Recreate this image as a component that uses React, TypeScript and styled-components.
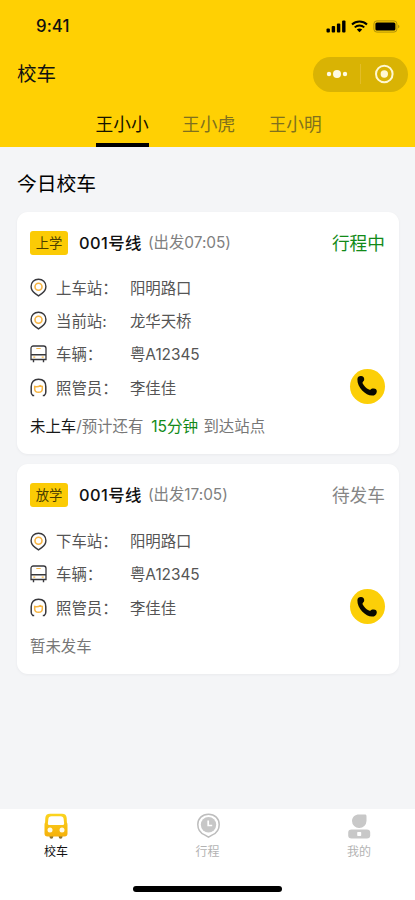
import React from "react";
import styled, { createGlobalStyle } from "styled-components";

const GlobalStyle = createGlobalStyle`
  * { box-sizing: border-box; }
  body {
    margin: 0;
    background: #f4f5f7;
    font-family: Inter, "Noto Sans CJK SC", sans-serif;
    color: #111;
  }
`;

const Screen = styled.div`
  width: 415px;
  height: 900px;
  display: flex;
  flex-direction: column;
  overflow: hidden;
  background: #f4f5f7;
`;

const Header = styled.header`
  height: 147px;
  flex: none;
  background: #ffd003;
  display: flex;
  flex-direction: column;
`;

const StatusBar = styled.div`
  height: 52px;
  padding: 0 15px 0 36px;
  display: flex;
  align-items: center;
  justify-content: space-between;
`;

const Clock = styled.span`
  font-size: 16.8px;
  font-weight: 500;
  line-height: 20px;
  letter-spacing: 0.1px;
`;

const StatusIcons = styled.div`
  display: flex;
  align-items: center;
  gap: 5px;
  svg { display: block; }
`;

const TitleBar = styled.div`
  height: 44px;
  padding: 0 7px 0 17px;
  display: flex;
  align-items: center;
  justify-content: space-between;
`;

const PageTitle = styled.h1`
  margin: 0;
  font-size: 19.5px;
  font-weight: 400;
  line-height: 26px;
`;

const Capsule = styled.div`
  width: 95px;
  height: 35px;
  border-radius: 18px;
  background: #d9b304;
  display: flex;
  align-items: center;
`;

const CapsuleHalf = styled.div<{ $divided?: boolean }>`
  flex: 1;
  height: 20px;
  display: flex;
  align-items: center;
  justify-content: center;
  border-right: ${(p) => (p.$divided ? "1px solid #e2bd28" : "none")};
`;

const Tabs = styled.nav`
  flex: 1;
  padding-left: 95.5px;
  display: flex;
  gap: 33.5px;
`;

const Tab = styled.div<{ $active?: boolean }>`
  height: 51px;
  padding-top: 16px;
  font-size: 17.7px;
  line-height: 26px;
  font-weight: 400;
  white-space: nowrap;
  color: ${(p) => (p.$active ? "#161300" : "#80701e")};
  border-bottom: 4px solid ${(p) => (p.$active ? "#000" : "transparent")};
`;

const Main = styled.main`
  flex: 1;
  padding: 22px 16px 0 17px;
  display: flex;
  flex-direction: column;
`;

const Heading = styled.h2`
  margin: 0 0 13px;
  font-size: 19.8px;
  font-weight: 400;
  line-height: 30px;
  color: #000;
`;

const Card = styled.section<{ $height: number }>`
  height: ${(p) => p.$height}px;
  margin-bottom: 10px;
  padding: 18px 14px 0 13px;
  border-radius: 11px;
  background: #fff;
  box-shadow: 0 1px 3px rgba(40, 40, 60, 0.05);
`;

const CardHead = styled.div`
  height: 25px;
  display: flex;
  align-items: center;
`;

const Badge = styled.span`
  width: 38px;
  height: 24px;
  border-radius: 3px;
  background: #fbcb05;
  color: #4a3d00;
  font-size: 13.3px;
  line-height: 24px;
  text-align: center;
`;

const Route = styled.span`
  width: 63px;
  margin-left: 11px;
  font-size: 16.4px;
  font-weight: 500;
  line-height: 24px;
  letter-spacing: 0.4px;
  white-space: nowrap;
`;

const Departure = styled.span`
  padding-top: 1px;
  margin-left: 6px;
  flex: 1;
  font-size: 15.4px;
  line-height: 24px;
  letter-spacing: -0.02px;
  color: #808080;
`;

const State = styled.span<{ $live: boolean }>`
  padding-top: 2px;
  font-size: 17.7px;
  line-height: 26px;
  color: ${(p) => (p.$live ? "#128a18" : "#868686")};
`;

const CardBody = styled.div<{ $live: boolean }>`
  margin-top: ${(p) => (p.$live ? 16 : 17.4)}px;
  display: flex;
  align-items: flex-end;
  justify-content: space-between;
`;

const Rows = styled.div`
  display: flex;
  flex-direction: column;
`;

const Row = styled.div`
  height: 33.3px;
  display: grid;
  grid-template-columns: 26px 74px auto;
  align-items: center;
  font-size: 15.4px;
  line-height: 24px;
  color: #555;
  svg { display: block; }
`;

const Label = styled.span`
  padding-top: 2px;
  white-space: nowrap;
`;

const Value = styled.span`
  padding-top: 2px;
  white-space: nowrap;
  letter-spacing: -0.05px;
`;

const CallButton = styled.button`
  width: 35.5px;
  height: 35.5px;
  padding: 0;
  border: 0;
  border-radius: 50%;
  background: #fccf08;
  display: flex;
  align-items: center;
  justify-content: center;
`;

const Note = styled.div`
  margin-top: 10px;
  font-size: 15.4px;
  line-height: 26px;
  color: #777;
`;

const Strong = styled.span`
  color: #171717;
`;

const Eta = styled.span`
  margin: 0 1px 0 3.5px;
  color: #128a18;
  font-size: 15.6px;
`;

const TabBar = styled.footer`
  height: 91px;
  flex: none;
  background: #fff;
  display: flex;
  flex-direction: column;
  align-items: center;
`;

const NavItems = styled.div`
  width: 100%;
  height: 77px;
  padding: 4px 29px 0 29px;
  display: flex;
  justify-content: space-between;
`;

const NavItem = styled.div<{ $active?: boolean }>`
  width: 54px;
  display: flex;
  flex-direction: column;
  align-items: center;
  font-size: 12px;
  line-height: 18px;
  gap: 4px;
  color: ${(p) => (p.$active ? "#111" : "#b3b3b3")};
  svg { display: block; }
`;

const HomeIndicator = styled.div`
  width: 149px;
  height: 6px;
  border-radius: 3px;
  background: #000;
`;

type IconName = "pin" | "bus" | "carer";

const PinIcon = () => (
  <svg width="17" height="19" viewBox="0 0 17 19" fill="none">
    <path d="M8.5 1.3C4.2 1.3 1.1 4.3 1.1 8.5c0 3 1.6 5.3 4.2 7.1l3.2 2.2 3.2-2.2c2.6-1.8 4.2-4.1 4.2-7.1 0-4.2-3.1-7.2-7.4-7.2Z" stroke="#38383c" strokeWidth="1.4" />
    <circle cx="8.5" cy="8.8" r="3.5" stroke="#f6b443" strokeWidth="1.6" />
  </svg>
);

const BusIcon = () => (
  <svg width="17" height="18" viewBox="0 0 17 18" fill="none">
    <path d="M1 14.5V3.4C1 1.9 1.900 1 3.400 1h10.200C15.100 1 16 1.900 16 3.400v11.100Z" stroke="#38383c" strokeWidth="1.3" />
    <path d="M1 9.8h15M3.500 14.500v2.800M13.500 14.500v2.800" stroke="#38383c" strokeWidth="1.4" />
    <path d="M6.300 3.500h4.400M3.300 12.200h2M11.700 12.200h2" stroke="#f6b443" strokeWidth="1.2" />
  </svg>
);

const CarerIcon = () => (
  <svg width="17" height="19" viewBox="0 0 17 19" fill="none">
    <path d="M4.2 17.4H2.700C1.600 16.700 1.200 15.500 1.200 14V8.700C1.200 4.100 4 1.300 8.500 1.300s7.300 2.800 7.300 7.400V14c0 1.500-.4 2.700-1.500 3.400h-1.500" stroke="#38383c" strokeWidth="1.5" />
    <path d="M4.700 8.500c2.300.4 4.100.1 5.500-.9.700.6 1.300.8 2.100.9v2.400c0 2.100-1.300 3.300-3.800 3.300s-3.800-1.200-3.800-3.300Z" stroke="#f6b443" strokeWidth="1.5" />
  </svg>
);

const icons: Record<IconName, React.FC> = { pin: PinIcon, bus: BusIcon, carer: CarerIcon };

const PhoneIcon = () => (
  <svg width="22" height="22" viewBox="0 0 22 22">
    <path d="M1.400 4.200C1.500 2.100 3 1 5 1.100c2.100.1 3.300 1.300 3.200 3.200 0 1.200-.5 2-1.400 2.600-.4.300-.4.900-.1 1.500 1.300 2.600 3.500 4.800 6.300 6.200.7.300 1.300.3 1.700-.2.600-.8 1.500-1.100 3-1 2 .1 3.200 1.200 3.100 3-.1 2.400-2.100 4.200-4.800 4.200C9.700 20.600 1 12.100 1.400 4.200Z" fill="#080800" />
  </svg>
);

interface Trip {
  badge: string;
  departure: string;
  state: string;
  live: boolean;
  height: number;
  rows: { icon: IconName; label: string; value: string }[];
  note: React.ReactNode;
}

const trips: Trip[] = [
  {
    badge: "上学",
    departure: "(出发07:05)",
    state: "行程中",
    live: true,
    height: 242,
    rows: [
      { icon: "pin", label: "上车站：", value: "阳明路口" },
      { icon: "pin", label: "当前站:", value: "龙华天桥" },
      { icon: "bus", label: "车辆：", value: "粤A12345" },
      { icon: "carer", label: "照管员：", value: "李佳佳" },
    ],
    note: (
      <>
        <Strong>未上车</Strong>/预计还有 <Eta>15分钟</Eta> 到达站点
      </>
    ),
  },
  {
    badge: "放学",
    departure: "(出发17:05)",
    state: "待发车",
    live: false,
    height: 210,
    rows: [
      { icon: "pin", label: "下车站：", value: "阳明路口" },
      { icon: "bus", label: "车辆：", value: "粤A12345" },
      { icon: "carer", label: "照管员：", value: "李佳佳" },
    ],
    note: "暂未发车",
  },
];

const TripCard = ({ trip }: { trip: Trip }) => (
  <Card $height={trip.height}>
    <CardHead>
      <Badge>{trip.badge}</Badge>
      <Route>001号线</Route>
      <Departure>{trip.departure}</Departure>
      <State $live={trip.live}>{trip.state}</State>
    </CardHead>
    <CardBody $live={trip.live}>
      <Rows>
        {trip.rows.map((r) => {
          const Icon = icons[r.icon];
          return (
            <Row key={r.label}>
              <Icon />
              <Label>{r.label}</Label>
              <Value>{r.value}</Value>
            </Row>
          );
        })}
      </Rows>
      <CallButton aria-label="电话">
        <PhoneIcon />
      </CallButton>
    </CardBody>
    <Note>{trip.note}</Note>
  </Card>
);

export default function App() {
  return (
    <Screen>
      <GlobalStyle />
      <Header>
        <StatusBar>
          <Clock>9:41</Clock>
          <StatusIcons>
            <svg width="20" height="13" viewBox="0 0 20 13">
              <rect x="0.5" y="8.5" width="3.4" height="4" rx="1" />
              <rect x="5.7" y="6" width="3.4" height="6.5" rx="1" />
              <rect x="10.9" y="3.5" width="3.4" height="9" rx="1" />
              <rect x="16.1" y="0.5" width="3.4" height="12" rx="1" />
            </svg>
            <svg width="17" height="13" viewBox="0 0 17 13" fill="none" stroke="#000">
              <path d="M1 4.5C5.200.5 11.800.5 16 4.500" strokeWidth="2" />
              <path d="M3.700 7.400c2.700-2.500 6.900-2.500 9.600 0" strokeWidth="1.9" />
              <path d="m8.500 12.200-2.700-2.700c1.500-1.400 3.900-1.400 5.400 0Z" fill="#000" stroke="none" />
            </svg>
            <svg width="27" height="13" viewBox="0 0 27 13">
              <rect x="0.9" y="0.9" width="23" height="11.2" rx="3" fill="none" stroke="#a78a0b" strokeWidth="0.9" />
              <rect x="2.4" y="2.4" width="20" height="8.2" rx="1.5" />
              <path d="M25.200 4.700c1.600.8 1.600 2.800 0 3.600Z" fill="#a78a0b" />
            </svg>
          </StatusIcons>
        </StatusBar>
        <TitleBar>
          <PageTitle>校车</PageTitle>
          <Capsule>
            <CapsuleHalf $divided>
              <svg width="22" height="10" viewBox="0 0 22 10" fill="#fffbe2">
                <circle cx="3" cy="5" r="2.2" />
                <circle cx="11" cy="5" r="4" />
                <circle cx="19" cy="5" r="2.2" />
              </svg>
            </CapsuleHalf>
            <CapsuleHalf>
              <svg width="20" height="20" viewBox="0 0 20 20">
                <circle cx="9.3" cy="10" r="8.3" fill="none" stroke="#fff8d2" strokeWidth="2" />
                <circle cx="9.3" cy="10" r="3.7" fill="#fff8d2" />
              </svg>
            </CapsuleHalf>
          </Capsule>
        </TitleBar>
        <Tabs>
          <Tab $active>王小小</Tab>
          <Tab>王小虎</Tab>
          <Tab>王小明</Tab>
        </Tabs>
      </Header>
      <Main>
        <Heading>今日校车</Heading>
        {trips.map((t) => (
          <TripCard key={t.badge} trip={t} />
        ))}
      </Main>
      <TabBar>
        <NavItems>
          <NavItem $active>
            <svg width="24" height="26" viewBox="0 0 24 26">
              <defs>
                <linearGradient id="busFill" x1="0" y1="0" x2="0" y2="1">
                  <stop offset="0" stopColor="#fbd51f" />
                  <stop offset="1" stopColor="#f5b00a" />
                </linearGradient>
              </defs>
              <path d="M5.500 22.500h3.800v1.300a1.900 1.900 0 0 1-3.800 0ZM14.700 22.500h3.800v1.300a1.900 1.900 0 0 1-3.800 0Z" fill="#8e762f" />
              <path d="M6 .7h12c3 0 4.500 1.500 4.700 4.300l.2 4.500c.4.600.6 1.300.6 2.600v8.400c0 2-1 3-3 3h-17c-2 0-3-1-3-3v-8.400c0-1.300.2-2 .6-2.600L1.300 5C1.500 2.200 3 .7 6 .7Z" fill="url(#busFill)" />
              <path d="M7.500 3.300h9c2 0 2.900.9 3.100 2.500l.5 4.200c.2 1.400-.4 2-1.700 2H5.600c-1.300 0-1.900-.6-1.700-2l.5-4.200c.2-1.600 1.100-2.500 3.100-2.500Z" fill="#fff" />
              <circle cx="6" cy="17" r="2.5" fill="#fffbe8" />
              <circle cx="18" cy="17" r="2.5" fill="#fffbe8" />
            </svg>
            校车
          </NavItem>
          <NavItem>
            <svg width="24" height="26" viewBox="0 0 24 26">
              <path d="M12.500 1.200C6.200 1.200 1.800 5.600 1.800 11.500c0 4.700 2.700 8.600 6.800 10.400l3.900 2.300 3.900-2.300c4.100-1.800 6.800-5.700 6.800-10.400C23.200 5.600 18.800 1.200 12.500 1.200Z" fill="#fff" stroke="#bdbdbd" strokeWidth="1.5" />
              <circle cx="12.5" cy="11.8" r="7.7" fill="#c7c7c7" />
              <path d="M12.200 7.500v5h4" fill="none" stroke="#fff" strokeWidth="1.7" />
            </svg>
            行程
          </NavItem>
          <NavItem>
            <svg width="24" height="26" viewBox="0 0 24 26" fill="#c8c8c8">
              <path d="M12 1.500h5.800c1.200 0 1.700.5 1.700 1.700V8a7.200 7.200 0 0 1-7.200 7A7 7 0 0 1 5 8c0-3.800 3-6.500 7-6.500Z" />
              <rect x="1.2" y="16.5" width="22" height="9" rx="3.3" />
              <rect x="10.2" y="19" width="4" height="4" rx="0.7" fill="#fff" />
            </svg>
            我的
          </NavItem>
        </NavItems>
        <HomeIndicator />
      </TabBar>
    </Screen>
  );
}
